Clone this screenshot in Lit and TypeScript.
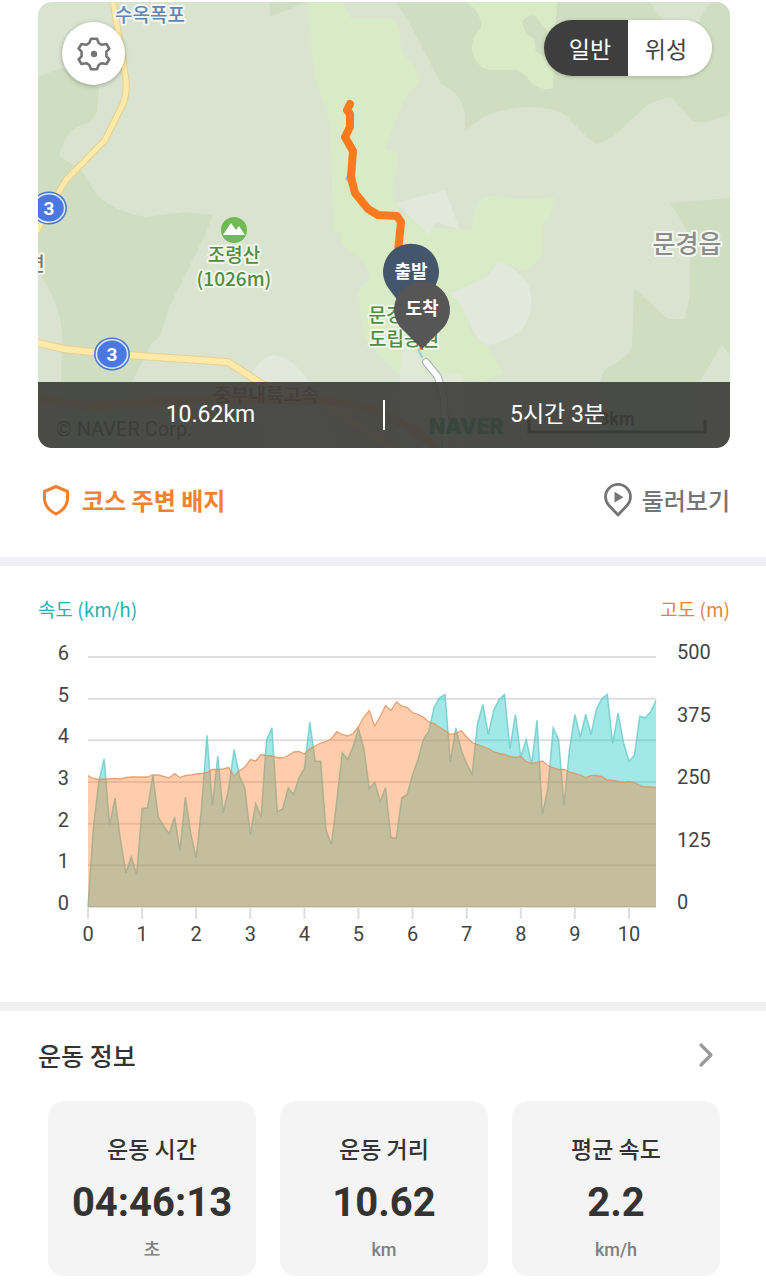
import { LitElement, html, svg, css } from "lit";
import { customElement, state } from "lit/decorators.js";
import { classMap } from "lit/directives/class-map.js";

// One sample every 100 m of the course.
const SPEED = [
  0, 1.9, 3.0, 3.56, 1.96, 2.62, 1.6, 0.82, 1.2, 0.78,
  2.36, 2.38, 3.16, 2.16, 1.94, 1.76, 2.16, 1.36, 2.64, 1.76,
  1.18, 2.4, 4.12, 2.44, 3.62, 2.26, 2.84, 3.78, 3.14, 2.84,
  1.74, 2.48, 2.16, 4.0, 4.3, 2.28, 2.36, 2.86, 2.7, 3.1,
  3.32, 4.44, 3.5, 3.5, 1.84, 1.5, 2.56, 3.7, 3.54, 3.86,
  4.28, 3.8, 2.84, 3.0, 2.54, 2.86, 1.67, 1.65, 2.62, 2.7,
  3.18, 3.54, 4.02, 4.22, 4.8, 5.02, 5.1, 3.48, 4.3, 3.76,
  3.44, 3.18, 4.4, 4.86, 4.14, 4.72, 4.98, 5.1, 3.8, 4.62,
  3.6, 4.02, 3.42, 4.48, 2.22, 2.84, 4.3, 4.02, 2.44, 3.76,
  4.62, 4.08, 4.62, 4.14, 4.76, 5.0, 5.1, 3.92, 4.66, 3.94,
  3.5, 3.64, 4.58, 4.54, 4.68, 4.96,
];

const ALTITUDE = [
  263, 257, 255, 256, 256, 257, 256, 259, 260, 260,
  260, 260, 264, 264, 261, 258, 267, 259, 263, 264,
  266, 267, 269, 275, 275, 276, 279, 262, 273, 280,
  295, 292, 305, 303, 302, 299, 298, 303, 310, 311,
  306, 317, 322, 328, 331, 337, 351, 345, 342, 347,
  361, 380, 393, 362, 381, 403, 393, 410, 402, 399,
  389, 385, 380, 370, 367, 359, 353, 345, 347, 353,
  340, 329, 325, 321, 317, 310, 307, 305, 301, 299,
  301, 291, 287, 289, 292, 283, 279, 275, 275, 270,
  267, 264, 259, 263, 263, 261, 254, 253, 251, 249,
  251, 249, 243, 240, 240, 239,
];

const PLOT = { left: 50, right: 618, top: 17, bottom: 267 };
const STEP = (PLOT.right - PLOT.left) / (SPEED.length - 1);

const trace = (values: number[], max: number) =>
  values
    .map((v, i) => {
      const x = PLOT.left + i * STEP;
      const y = PLOT.bottom - (v / max) * (PLOT.bottom - PLOT.top);
      return `${x.toFixed(1)},${y.toFixed(1)}`;
    })
    .join(" ");

const area = (line: string) =>
  `${PLOT.left},${PLOT.bottom} ${line} ${PLOT.right},${PLOT.bottom}`;

@customElement("course-map")
class CourseMap extends LitElement {
  @state() private mode = "일반";

  static styles = css`
    :host {
      display: block;
      position: relative;
      aspect-ratio: 692 / 446;
      border-radius: 14px;
      overflow: hidden;
      background: #dae3cf;
    }
    .canvas {
      display: block;
      width: 100%;
      height: 100%;
    }
    .label {
      font-family: "Noto Sans CJK KR", sans-serif;
      font-size: 19px;
      font-weight: 500;
      text-anchor: middle;
      paint-order: stroke;
      stroke: #f2f6ee;
      stroke-width: 4px;
      stroke-linejoin: round;
    }
    .green { fill: #4f8d45; }
    .water { fill: #5f86b8; }
    .town { fill: #8b8b8b; font-size: 25px; }
    .highway { fill: #8a4a3c; }
    .plain { stroke: none; }
    .shield { font-family: Roboto, sans-serif; font-weight: 700; fill: #fff; stroke: none; }
    .credit { font-family: Roboto, sans-serif; font-size: 20px; fill: #333; }
    .brand { font-family: Inter, sans-serif; font-size: 21px; font-weight: 900; fill: #009a55; }
    .scale { font-family: Roboto, sans-serif; font-size: 18px; font-weight: 700; fill: #111; }
    .pin-text {
      font-family: "Noto Sans CJK KR", sans-serif;
      font-size: 18px;
      font-weight: 700;
      fill: #fff;
      text-anchor: middle;
    }
    .top {
      position: absolute;
      inset: 18px 18px auto 24px;
      display: flex;
      justify-content: space-between;
      align-items: flex-start;
    }
    button {
      border: 0;
      margin: 0;
      padding: 0;
      font: inherit;
      cursor: pointer;
    }
    .gear {
      width: 63px;
      height: 63px;
      margin-top: 2px;
      border-radius: 50%;
      background: #fff;
      box-shadow: 0 1px 4px rgba(0, 0, 0, 0.3);
      display: grid;
      place-items: center;
    }
    .toggle {
      display: flex;
      border-radius: 28px;
      overflow: hidden;
      box-shadow: 0 1px 4px rgba(0, 0, 0, 0.2);
    }
    .mode {
      width: 84px;
      height: 56px;
      background: #fff;
      color: #444;
      font: 400 23px/56px "Noto Sans CJK KR", sans-serif;
    }
    .mode:first-child { padding-left: 8px; }
    .mode:last-child { padding-right: 8px; }
    .on { background: #3e3e3e; color: #fff; }
    .summary {
      position: absolute;
      inset: auto 0 0 0;
      display: grid;
      grid-template-columns: 1fr 2px 1fr;
      align-items: center;
      height: 66px;
      background: rgba(62, 62, 60, 0.92);
      color: #fff;
      font: 400 23px/32px Roboto, "Noto Sans CJK KR", sans-serif;
      text-align: center;
    }
    .bar { height: 30px; background: #fff; }
  `;

  private shield(x: number, y: number) {
    return svg`
      <ellipse cx=${x} cy=${y} rx="18" ry="16.5" fill="#4a78d0"/>
      <ellipse cx=${x} cy=${y} rx="16.4" ry="15" fill="#dfeaff"/>
      <ellipse cx=${x} cy=${y} rx="14.8" ry="13.5" fill="#4a78e0"/>
      <text class="label shield" x=${x} y=${y + 7}>3</text>`;
  }

  render() {
    return html`
      <svg class="canvas" viewBox="38 2 692 446" preserveAspectRatio="xMidYMid slice" role="img" aria-label="코스 지도">
        <g fill="#cfddc0">
          <path d="M38 77 62 68 99 88 97 112 90 122Q76 127 70 132 63 142 59 156L75 166 82 172 97 195Q115 212 145 217L185 212 213 215 205 235 170 305 160 336 150 345 133 381 120 448H60L62 330Q58 300 38 270Z"/>
          <path d="M270 2H307L270 17Z"/>
          <path d="M395 2 408 20 440 82 456 94Q464 104 465 115V130L485 116Q505 108 530 107 552 107 565 115L590 140 597 144 615 135 645 107Q660 97 672 98L692 120Q700 127 730 114V2Z"/>
          <path d="M670 203 730 198V355L722 345 700 381 695 448H590L602 375 606 368Q630 356 632 346L634 288 668 319H685L690 295V240Q684 222 670 203Z"/>
        </g>
        <path d="M650 2 664 22H699Q704 4 716 2Z" fill="#dae3cf"/>
        <g fill="#d8ebc6">
          <path d="M307 2H343L350 18H383Q398 18 400 32 399 50 408 60 422 74 418 85 403 94 400 110L385 149 398 153 393 195 400 214 435 228 472 230Q472 206 482 198 493 193 510 199L554 198Q553 217 543 223L542 255Q533 268 523 271L498 262 466 300 470 333 488 348 504 374 480 381 445 379 400 375 365 340 357 292 369 280Q368 262 360 257 342 250 340 233L333 230 331 130Q327 108 321 94 312 78 307 2Z"/>
          <path d="M466 2Q482 12 481 28 471 38 472 50 475 67 490 70L516 70Q526 73 530 82 543 92 553 88L557 2Z"/>
        </g>
        <path d="M522 22Q530 11 537 18L548 32 550 60 536 52 534 39Q525 35 522 22Z" fill="#cfddc0"/>
        <g fill="#e3e8dc">
          <path d="M396 203 445 190 460 230 437 222 428 234Z"/>
          <path d="M450 293 486 278 498 262Q515 266 528 284 536 304 525 325 512 341 488 345 477 343 470 324 464 306 450 293Z"/>
          <path d="M253 371Q264 355 273 355 294 358 308 381L340 448H260Z"/>
          <path d="M402 345 420 355 425 374H462L470 448H395Z" opacity=".7"/>
        </g>
        <path d="M348 174 345 179 350 184Z" fill="#a9bdd0"/>

        <g fill="none" stroke-linejoin="round" stroke-linecap="round">
          <path d="M112-4Q120 42 126 80 127 96 122 106L105 140 66 180 46 214 32 240" stroke="#e6cf93" stroke-width="7"/>
          <path d="M112-4Q120 42 126 80 127 96 122 106L105 140 66 180 46 214 32 240" stroke="#feeaa8" stroke-width="5"/>
          <path d="M30 341 64 349 112 354 228 362 262 384 330 405 420 470" stroke="#e6cf93" stroke-width="8"/>
          <path d="M30 341 64 349 112 354 228 362 262 384 330 405 420 470" stroke="#feeaa8" stroke-width="6"/>
          <path d="M30 394Q60 407 110 405L220 398 340 402Q400 412 440 452" stroke="#f4b877" stroke-width="8"/>
          <path d="M418 349 422 357" stroke="#8fd0e8" stroke-width="2"/>
          <path d="M426 362 438 377 444 400 446 448" stroke="#a9afb9" stroke-width="8"/>
          <path d="M426 362 438 377 444 400 446 448" stroke="#fff" stroke-width="6"/>
          <path d="M350 104 347 110 350 114 350 127 345 137 353 151 351 177 355 193 368 209 378 215 397 216 401 222 398 252" stroke="#fb7a1f" stroke-width="8"/>
          <path d="M422 346V347" stroke="#f0692a" stroke-width="6"/>
        </g>

        ${this.shield(49, 208)} ${this.shield(112, 354)}
        <text class="label water" x="150" y="22">수옥폭포</text>
        <text class="label" x="36" y="271" fill="#777" font-size="24">면</text>
        <circle cx="234" cy="230" r="13" fill="#6fba55"/>
        <path d="M223 235 231 223 236 230 239 226 245 235Z" fill="#fff"/>
        <text class="label green" x="234" y="262">조령산</text>
        <text class="label green" x="234" y="286">(1026m)</text>
        <text class="label town" x="687" y="253">문경읍</text>
        <text class="label green" x="386" y="322">문경</text>
        <text class="label green" x="404" y="346">도립공원</text>
        <text class="label highway plain" x="266" y="402">중부내륙고속</text>
        <text class="credit" x="56" y="436">© NAVER Corp.</text>
        <text class="brand" x="429" y="434">NAVER</text>
        <text class="scale" x="599" y="425">3km</text>
        <path d="M529 420V432H705V420" fill="none" stroke="#111" stroke-width="3"/>

        <path d="M411 318 389 289A28 28 0 1 1 433 289Z" fill="#43566b"/>
        <text class="pin-text" x="411" y="278">출발</text>
        <path d="M422 349 400 327A28 28 0 1 1 444 327Z" fill="#565656"/>
        <text class="pin-text" x="422" y="315">도착</text>
      </svg>

      <div class="top">
        <button class="gear" aria-label="설정">
          <svg width="36" height="36" viewBox="-18 -18 36 36">
            <path d="M-3-15.300H3L4.700-11 7.700-9.200 12.500-10 15.400-5.300 12.400-2.300V2.300L15.400 5.300 12.500 10 7.700 9.200 4.700 11 3 15.300H-3L-4.700 11-7.700 9.200-12.500 10-15.400 5.300-12.400 2.300V-2.300L-15.400-5.300-12.500-10-7.700-9.200-4.700-11Z" fill="none" stroke="#757575" stroke-width="2.600" stroke-linejoin="round"/>
            <circle r="3.2" fill="#757575"/>
          </svg>
        </button>
        <div class="toggle" role="group" aria-label="지도 종류">
          ${["일반", "위성"].map(
            (m) => html`<button
              class=${classMap({ mode: true, on: this.mode === m })}
              aria-pressed=${this.mode === m}
              @click=${() => (this.mode = m)}
            >${m}</button>`
          )}
        </div>
      </div>

      <div class="summary">
        <span>10.62km</span><span class="bar"></span><span>5시간 3분</span>
      </div>
    `;
  }
}

@customElement("course-chart")
class CourseChart extends LitElement {
  static styles = css`
    :host { display: block; }
    .legend {
      display: flex;
      justify-content: space-between;
      font: 400 19px/24px "Noto Sans CJK KR", sans-serif;
    }
    .speed { color: #1fb3b3; }
    .altitude { color: #e5853a; }
    .plot { display: block; width: 100%; margin-top: 19px; }
    .tick { font: 400 20px Roboto, sans-serif; fill: #444; }
    .end { text-anchor: end; }
    .mid { text-anchor: middle; }
  `;

  render() {
    const speed = trace(SPEED, 6);
    const altitude = trace(ALTITUDE, 500);
    const height = PLOT.bottom - PLOT.top;
    const rows = [0, 1, 2, 3, 4, 5, 6];
    const columns = [0, 1, 2, 3, 4, 5, 6, 7, 8, 9, 10];
    return html`
      <div class="legend">
        <span class="speed">속도 (km/h)</span>
        <span class="altitude">고도 (m)</span>
      </div>
      <svg class="plot" viewBox="0 0 692 310" role="img" aria-label="거리별 속도와 고도">
        ${rows.map((n) => {
          const y = PLOT.bottom - (n / 6) * height;
          return svg`
            <line x1=${PLOT.left} x2=${PLOT.right} y1=${y} y2=${y} stroke="#dedede" stroke-width="2"/>
            <text class="tick end" x="31" y=${y + 3}>${n}</text>`;
        })}
        ${[0, 125, 250, 375, 500].map(
          (n) => svg`<text class="tick" x="639" y=${PLOT.bottom - (n / 500) * height + 2}>${n}</text>`
        )}
        ${columns.map((n) => {
          const x = PLOT.left + n * 10 * STEP;
          return svg`
            <line x1=${x} x2=${x} y1="268" y2="279" stroke="#dedede" stroke-width="2"/>
            <text class="tick mid" x=${x} y="301">${n}</text>`;
        })}
        <polygon points=${area(speed)} fill="rgba(34,200,200,.42)"/>
        <polyline points=${speed} fill="none" stroke="#6cc9c9" stroke-opacity=".8" stroke-width="1.5"/>
        <polygon points=${area(altitude)} fill="rgba(255,120,28,.37)"/>
        <polyline points=${altitude} fill="none" stroke="#e0915f" stroke-opacity=".8" stroke-width="1.3"/>
      </svg>
    `;
  }
}

@customElement("app-root")
class AppRoot extends LitElement {
  static styles = css`
    :host {
      display: block;
      background: #fff;
      color: #333;
      font-family: Roboto, "Noto Sans CJK KR", sans-serif;
    }
    .course { padding: 2px 36px 40px 38px; }
    .actions {
      display: flex;
      justify-content: space-between;
      align-items: center;
      margin-top: 35px;
    }
    .action {
      display: flex;
      align-items: center;
      gap: 8px;
      border: 0;
      padding: 0;
      background: none;
      color: #757575;
      font: 500 24px/32px "Noto Sans CJK KR", sans-serif;
      cursor: pointer;
    }
    .badge { color: #f0822f; font-weight: 700; }
    .chart { padding: 31px 36px 52px 38px; border-top: 9px solid #f1f1f5; }
    .info { padding: 28px 46px 4px 48px; border-top: 9px solid #f1f1f1; }
    .heading {
      display: flex;
      justify-content: space-between;
      align-items: center;
      margin: 0 0 30px -10px;
    }
    h2 { margin: 0; font: 500 25px/32px "Noto Sans CJK KR", sans-serif; }
    .more { display: grid; padding: 0; border: 0; background: none; cursor: pointer; }
    .cards { display: grid; grid-template-columns: repeat(3, 1fr); gap: 24px; margin: 0; }
    .card {
      display: flex;
      flex-direction: column;
      align-items: center;
      padding: 31px 0 14px;
      border-radius: 16px;
      background: #f4f4f4;
    }
    dt { font: 500 23px/32px "Noto Sans CJK KR", sans-serif; }
    dd { margin: 0; }
    .value { margin-top: 15px; font: 700 40px/48px Roboto, sans-serif; }
    .unit { margin-top: 11px; color: #808080; font: 500 18px/24px Roboto, "Noto Sans CJK KR", sans-serif; }
  `;

  render() {
    const cards = [
      ["운동 시간", "04:46:13", "초"],
      ["운동 거리", "10.62", "km"],
      ["평균 속도", "2.2", "km/h"],
    ];
    return html`
      <section class="course">
        <course-map></course-map>
        <div class="actions">
          <button class="action badge">
            <svg width="36" height="32" viewBox="0 0 36 32">
              <path d="M18 2.5 29.500 7.500V15.500Q28.500 25 18 30 7.500 25 6.500 15.500V7.500Z" fill="none" stroke="currentColor" stroke-width="3" stroke-linejoin="round"/>
            </svg>
            코스 주변 배지
          </button>
          <button class="action">
            <svg width="32" height="34" viewBox="0 0 32 34">
              <path d="M16 32 7 22.500A12.500 12.500 0 1 1 25 22.500Z" fill="none" stroke="currentColor" stroke-width="2.800" stroke-linejoin="round"/>
              <path d="M12.500 8.800 21.500 14.200 12.500 19.600Z" fill="currentColor"/>
            </svg>
            둘러보기
          </button>
        </div>
      </section>

      <section class="chart"><course-chart></course-chart></section>

      <section class="info">
        <div class="heading">
          <h2>운동 정보</h2>
          <button class="more" aria-label="운동 정보 더보기">
            <svg width="28" height="28" viewBox="0 0 28 28">
              <path d="M9 4 19 14 9 24" fill="none" stroke="#999" stroke-width="3.200" stroke-linecap="round" stroke-linejoin="round"/>
            </svg>
          </button>
        </div>
        <dl class="cards">
          ${cards.map(
            ([name, value, unit]) => html`
              <div class="card">
                <dt>${name}</dt>
                <dd class="value">${value}</dd>
                <dd class="unit">${unit}</dd>
              </div>`
          )}
        </dl>
      </section>
    `;
  }
}
